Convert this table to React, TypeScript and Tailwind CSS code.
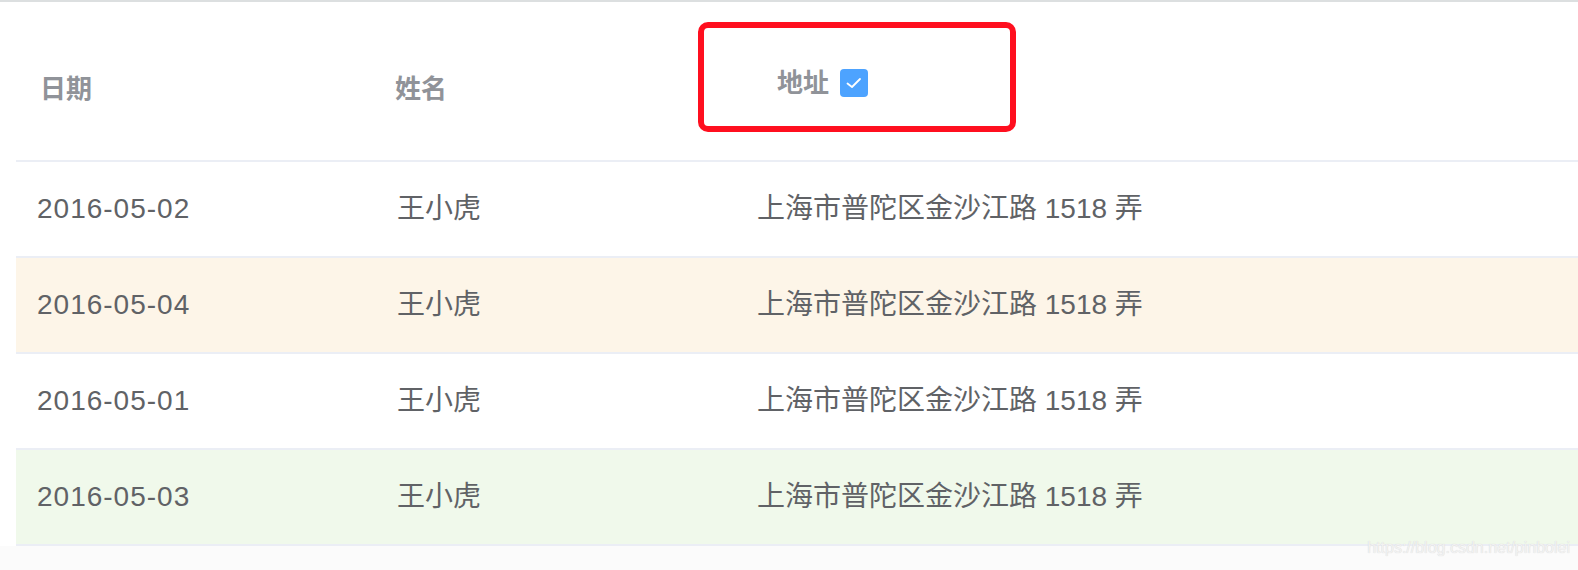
const rows = [
  { date: '2016-05-02', name: '王小虎', address: '上海市普陀区金沙江路 1518 弄', bg: 'bg-white' },
  { date: '2016-05-04', name: '王小虎', address: '上海市普陀区金沙江路 1518 弄', bg: 'bg-[#fdf5e8]' },
  { date: '2016-05-01', name: '王小虎', address: '上海市普陀区金沙江路 1518 弄', bg: 'bg-white' },
  { date: '2016-05-03', name: '王小虎', address: '上海市普陀区金沙江路 1518 弄', bg: 'bg-[#f0f9eb]' },
];

function CheckIcon() {
  return (
    <span className="inline-flex items-center justify-center w-[28px] h-[28px] rounded-[4px] bg-[#4da3ff]">
      <svg width="18" height="18" viewBox="0 0 18 18" fill="none">
        <path d="M2.5 9.5 L7 13 L15 5" stroke="white" strokeWidth="1.8" strokeLinecap="round" strokeLinejoin="round" />
      </svg>
    </span>
  );
}

export default function App() {
  return (
    <div
      className="relative w-[1578px] h-[570px] bg-white overflow-hidden"
      style={{ fontFamily: '"Liberation Sans", "Noto Sans CJK SC", sans-serif' }}
    >
      <div className="h-[2px] bg-[#dcdfe0]" />

      <div className="ml-[16px]">
        {/* header */}
        <div className="grid grid-cols-[359px_362px_1fr] h-[160px] border-b-2 border-[#ebeef5] text-[26px] font-bold text-[#909399]">
          <div className="flex items-center pl-[24px] pt-[16px]">日期</div>
          <div className="flex items-center pl-[20px] pt-[16px]">姓名</div>
          <div className="relative">
            <div className="absolute left-[-39px] top-[20px] w-[318px] h-[110px] rounded-[10px] border-[6px] border-[#ff0f1f]" />
            <div className="flex items-center gap-[11px] pl-[40px] pt-[66px]">
              <span className="leading-[30px]">地址</span>
              <CheckIcon />
            </div>
          </div>
        </div>

        {/* body */}
        {rows.map((r, i) => (
          <div
            key={i}
            className={`grid grid-cols-[359px_362px_1fr] h-[96px] border-b-2 border-[#ebeef5] text-[28px] text-[#606266] ${r.bg}`}
          >
            <div className="flex items-center pl-[21px] tracking-[1px]">{r.date}</div>
            <div className="flex items-center pl-[22px]">{r.name}</div>
            <div className="flex items-center pl-[20px]">{r.address}</div>
          </div>
        ))}
      </div>

      <div className="h-[30px] bg-[#fbfbfb]" />

      <div
        className="absolute right-[8px] bottom-[10px] text-[16px] text-[#f2f2f2]"
        style={{ textShadow: '0 0 1px #d0d0d0' }}
      >
        https://blog.csdn.net/pinbolei
      </div>
    </div>
  );
}
